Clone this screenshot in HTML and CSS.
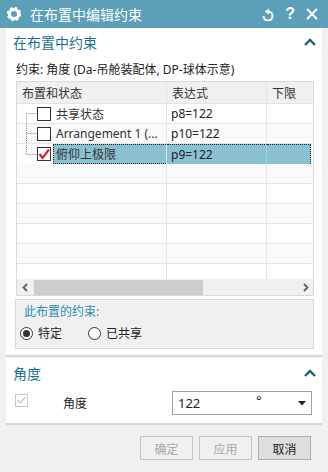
FILE: index.html
```html
<!DOCTYPE html>
<html lang="zh">
<head>
<meta charset="UTF-8" />
<title>在布置中编辑约束</title>
<link rel="stylesheet" href="styles.css">
</head>
<body>

<div class="window">
  <div class="titlebar">
    <svg class="gear" viewBox="0 0 14 14" width="14" height="14">
      <circle cx="7" cy="7" r="4.6" fill="none" stroke="#fff" stroke-width="3.2"/>
      <circle cx="7" cy="7" r="6" fill="none" stroke="#fff" stroke-width="2.4" stroke-dasharray="2.4 2.31"/>
    </svg>
    <span class="title">在布置中编辑约束</span>
    <div class="title-tools">
      <svg viewBox="0 -1 12 13" width="12" height="13">
        <path d="M6 2.5 A4.5 4.5 0 1 1 1.5 7" fill="none" stroke="#fff" stroke-width="2"/>
        <polygon points="2.8,2.5 6.8,-0.6 6.8,5.6" fill="#fff"/>
      </svg>
      <span class="help">?</span>
      <svg viewBox="0 0 12 12" width="12" height="12">
        <path d="M1 1 L11 11 M11 1 L1 11" stroke="#fff" stroke-width="2"/>
      </svg>
    </div>
  </div>

  <div class="content">
    <section class="panel">
      <div class="panel-head">
        <span>在布置中约束</span>
        <svg class="chevron" viewBox="0 0 12 8" width="12" height="8"><polyline points="1,7 6,2 11,7" fill="none" stroke="#1b5f7c" stroke-width="2.4"/></svg>
      </div>
      <div class="constraint">约束: 角度 (Da-吊舱装配体, DP-球体示意)</div>

      <div class="grid">
        <div class="grid-row grid-head">
          <div class="cell">布置和状态</div>
          <div class="cell">表达式</div>
          <div class="cell">下限</div>
        </div>
        <div class="grid-body">
          <div class="grid-row">
            <div class="cell tree-cell">
              <svg class="tree" viewBox="0 0 11 19" width="11" height="19"><path d="M0.5 9.5 V19 M0.5 9.5 H11" stroke="#8c8c8c" stroke-dasharray="1 1"/></svg>
              <span class="check"></span>
              <span class="node">共享状态</span>
            </div>
            <div class="cell">p8=122</div>
            <div class="cell"></div>
          </div>
          <div class="grid-row alt">
            <div class="cell tree-cell">
              <svg class="tree" viewBox="0 0 11 19" width="11" height="19"><path d="M0.5 0 V20 M0.5 9.5 H11" stroke="#8c8c8c" stroke-dasharray="1 1"/></svg>
              <span class="check"></span>
              <span class="node">Arrangement 1 (...</span>
            </div>
            <div class="cell">p10=122</div>
            <div class="cell"></div>
          </div>
          <div class="grid-row selected">
            <div class="cell tree-cell">
              <svg class="tree" viewBox="0 0 11 19" width="11" height="19"><path d="M0.5 0 V10 M0.5 9.5 H11" stroke="#8c8c8c" stroke-dasharray="1 1"/></svg>
              <span class="check">
                <svg viewBox="0 0 12 12" width="12" height="12"><polyline points="1.5,6 4.5,10 11,1.5" fill="none" stroke="#e3202e" stroke-width="2.2"/></svg>
              </span>
              <span class="node focus">俯仰上极限</span>
            </div>
            <div class="cell focus">p9=122</div>
            <div class="cell focus last"></div>
          </div>
          <div class="grid-row alt"><div class="cell"></div><div class="cell"></div><div class="cell"></div></div>
          <div class="grid-row"><div class="cell"></div><div class="cell"></div><div class="cell"></div></div>
          <div class="grid-row alt"><div class="cell"></div><div class="cell"></div><div class="cell"></div></div>
          <div class="grid-row"><div class="cell"></div><div class="cell"></div><div class="cell"></div></div>
          <div class="grid-row alt"><div class="cell"></div><div class="cell"></div><div class="cell"></div></div>
          <div class="grid-row"><div class="cell"></div><div class="cell"></div><div class="cell"></div></div>
        </div>
        <div class="hscroll">
          <svg class="arrow" viewBox="0 0 6 9" width="6" height="9"><polyline points="5,1 1.5,4.5 5,8" fill="none" stroke="#606060" stroke-width="1.8"/></svg>
          <div class="track"><div class="thumb"></div></div>
          <svg class="arrow" viewBox="0 0 6 9" width="6" height="9"><polyline points="1,1 4.5,4.5 1,8" fill="none" stroke="#606060" stroke-width="1.8"/></svg>
        </div>
      </div>

      <div class="group">
        <div class="group-label">此布置的约束:</div>
        <div class="radios">
          <label class="radio"><span class="dot on"></span>特定</label>
          <label class="radio"><span class="dot"></span>已共享</label>
        </div>
      </div>
    </section>

    <section class="panel panel-angle">
      <div class="panel-head">
        <span>角度</span>
        <svg class="chevron" viewBox="0 0 12 8" width="12" height="8"><polyline points="1,7 6,2 11,7" fill="none" stroke="#1b5f7c" stroke-width="2.4"/></svg>
      </div>
      <div class="angle-row">
        <span class="check disabled">
          <svg viewBox="0 0 12 12" width="12" height="12"><polyline points="2,6 5,9 10,3" fill="none" stroke="#c4c4c4" stroke-width="1.3"/></svg>
        </span>
        <span class="angle-label">角度</span>
        <div class="combo">
          <span class="value">122</span>
          <span class="unit">°</span>
          <svg viewBox="0 0 8 5" width="8" height="5"><polygon points="0,0 8,0 4,4.5" fill="#222"/></svg>
        </div>
      </div>
    </section>

    <div class="buttons">
      <button disabled>确定</button>
      <button disabled>应用</button>
      <button class="cancel">取消</button>
    </div>
  </div>
</div>

</body>
</html>
```

FILE: styles.css
```css
body {
  margin: 0;
  background: #f0f0f0;
  font-family: "Noto Sans", "Noto Sans CJK SC", sans-serif;
  font-size: 12px;
  color: #222;
}
.window {
  width: 328px;
  height: 472px;
  background: #f0f0f0;
}
.titlebar {
  height: 28px;
  background: #5ba0b8;
  display: flex;
  align-items: center;
  padding: 0 10px 0 7px;
  color: #fff;
}
.gear {
  margin-right: 9px;
}
.title {
  font-size: 14px;
  flex: 1;
}
.title-tools {
  display: flex;
  align-items: center;
  gap: 11px;
}
.help {
  font-family: "Liberation Sans", sans-serif;
  font-weight: bold;
  font-size: 16px;
  line-height: 16px;
}
.panel {
  background: #fff;
  margin: 0 6px;
  padding-bottom: 6px;
  border-bottom: 2px solid #d6d6d6;
}
.panel-head {
  height: 28px;
  display: flex;
  align-items: center;
  justify-content: space-between;
  padding: 0 6px 0 7px;
  font-size: 14px;
  color: #1a6f91;
}
.constraint {
  height: 25px;
  display: flex;
  align-items: center;
  padding-left: 10px;
  color: #222;
}
.grid {
  margin-left: 10px;
  width: 296px;
  border: 1px solid #d9d9d9;
}
.grid-row {
  display: grid;
  grid-template-columns: 150px 100px 44px;
  height: 20px;
}
.grid-head {
  height: 22px;
  background: #f0f0f0;
  color: #333;
}
.cell {
  border-right: 1px solid #e4e4e4;
  border-bottom: 1px solid #e4e4e4;
  display: flex;
  align-items: center;
  padding-left: 4px;
  white-space: nowrap;
  overflow: hidden;
}
.grid-head .cell {
  padding-left: 5px;
}
.grid-row .cell:last-child {
  border-right: none;
}
.grid-body {
  height: 175px;
  overflow: hidden;
}
.alt {
  background: #f9f9f9;
}
.tree-cell {
  padding-left: 9px;
}
.tree {
  flex: none;
}
.check {
  flex: none;
  width: 14px;
  height: 14px;
  box-sizing: border-box;
  border: 1px solid #333;
  background: #fff;
  display: flex;
  align-items: center;
  justify-content: center;
}
.node {
  margin-left: 2px;
  padding-left: 3px;
  height: 100%;
  display: flex;
  align-items: center;
  flex: 1;
  color: #333;
}
.selected .focus {
  background: #89c1d3;
  border-top: 1px dotted #222;
  border-bottom: 1px dotted #222;
  box-sizing: border-box;
}
.selected .node.focus {
  border-left: 1px dotted #222;
  padding-left: 2px;
}
.selected .cell {
  border-bottom: none;
}
.selected .cell.focus {
  border-right: 1px solid #a3cfdc;
}
.selected .cell.last {
  border-right: 1px dotted #222;
}
.hscroll {
  height: 16px;
  background: #f0f0f0;
  display: flex;
  align-items: center;
  padding: 0 4px 0 5px;
}
.hscroll .arrow {
  flex: none;
}
.track {
  flex: 1;
  height: 15px;
  margin: 0 6px;
}
.thumb {
  width: 169px;
  height: 15px;
  background: #cdcdcd;
}
.group {
  margin: 3px 0 0 9px;
  width: 299px;
  box-sizing: border-box;
  border: 1px solid #d9d9d9;
  background: #f0f0f0;
  padding: 5px 0 5px 4px;
}
.group-label {
  height: 14px;
  line-height: 14px;
  padding-left: 4px;
  color: #2b8db3;
}
.radios {
  margin-top: 4px;
  height: 20px;
  display: flex;
  align-items: center;
}
.radio {
  display: flex;
  align-items: center;
  gap: 5px;
  color: #222;
}
.radio + .radio {
  margin-left: 26px;
}
.dot {
  width: 13px;
  height: 13px;
  box-sizing: border-box;
  border: 1px solid #333;
  border-radius: 50%;
  background: #fff;
  display: flex;
  align-items: center;
  justify-content: center;
}
.dot.on::after {
  content: "";
  width: 7px;
  height: 7px;
  border-radius: 50%;
  background: #333;
}
.panel-angle {
  margin-top: 1px;
  padding-bottom: 5px;
}
.panel-angle .panel-head {
  height: 30px;
}
.angle-row {
  height: 30px;
  display: flex;
  align-items: center;
  padding-left: 9px;
}
.check.disabled {
  width: 13px;
  height: 13px;
  border-color: #c8c8c8;
  margin-top: -6px;
}
.angle-label {
  margin-left: 35px;
  flex: 1;
  color: #222;
}
.combo {
  width: 140px;
  height: 24px;
  box-sizing: border-box;
  border: 1px solid #a0a0a0;
  margin-right: 10px;
  display: flex;
  align-items: center;
  padding: 0 5px;
  font-size: 13px;
}
.combo .value {
  width: 78px;
}
.combo .unit {
  flex: 1;
  margin-top: -6px;
}
.buttons {
  display: flex;
  justify-content: flex-end;
  gap: 6px;
  margin-top: 11px;
  padding-right: 17px;
}
button {
  width: 53px;
  height: 24px;
  font-family: "Noto Sans CJK SC", sans-serif;
  font-size: 12px;
  background: #f0f0f0;
  border: 1px solid #c4c4c4;
  color: #a8a8a8;
  padding: 0;
}
button.cancel {
  background: #dedede;
  border-color: #adadad;
  color: #222;
}
```
